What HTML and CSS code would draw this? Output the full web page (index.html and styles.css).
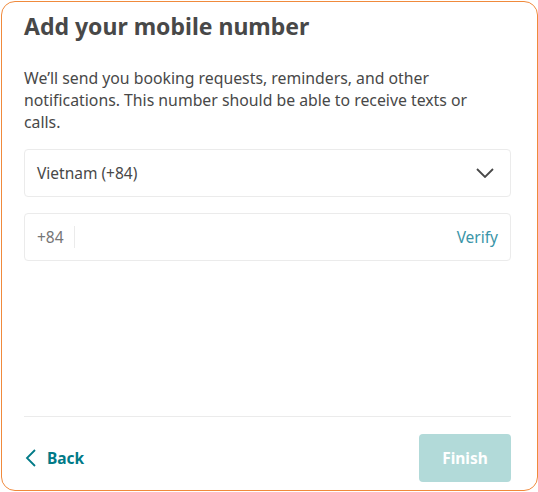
FILE: index.html
```html
<!DOCTYPE html>
<html>
<head>
<meta charset="utf-8">
<link rel="stylesheet" href="styles.css">
</head>
<body>
<div class="card">
  <div class="main">
    <h1 class="title">Add your mobile number</h1>
    <p class="desc">We’ll send you booking requests, reminders, and other notifications. This number should be able to receive texts or calls.</p>
    <div class="field select">
      <span class="value">Vietnam (+84)</span>
      <svg class="chev" width="18" height="10" viewBox="0 0 18 10"><path d="M1 1 L9 9 L17 1" fill="none" stroke="#484848" stroke-width="1.8"/></svg>
    </div>
    <div class="field phone">
      <span class="prefix">+84</span>
      <span class="sep"></span>
      <span class="grow"></span>
      <span class="verify">Verify</span>
    </div>
  </div>
  <div class="footer">
    <a class="back">
      <svg width="12" height="18" viewBox="0 0 12 18"><path d="M10 1 L2 9 L10 17" fill="none" stroke="#007a87" stroke-width="1.8"/></svg>
      <span>Back</span>
    </a>
    <button class="finish">Finish</button>
  </div>
</div>
</body>
</html>
```
FILE: styles.css
```css
html, body { margin: 0; padding: 0; background: #fff; }
body { font-family: "Noto Sans", "DejaVu Sans", sans-serif; color: #484848; }
.card {
  box-sizing: border-box;
  width: 537px;
  height: 490px;
  margin: 1px 0 0 1px;
  border: 1px solid #f08a3c;
  border-radius: 14px;
  padding: 0 26px 0 22px;
  display: flex;
  flex-direction: column;
}
.main { flex: 1; }
.title {
  margin: 7px 0 0;
  font-size: 23px;
  font-weight: 700;
  line-height: 34px;
  color: #484848;
}
.desc {
  margin: 24px 0 0;
  padding-right: 10px;
  font-size: 15.8px;
  line-height: 22px;
  color: #484848;
}
.field {
  box-sizing: border-box;
  height: 48px;
  border: 1px solid #ebebeb;
  border-radius: 4px;
  display: flex;
  align-items: center;
  padding: 0 12px;
  font-size: 15.5px;
}
.select { margin-top: 16px; justify-content: space-between; }
.select .chev { margin-right: 4px; }
.phone { margin-top: 16px; }
.prefix { color: #767676; }
.sep { width: 1px; height: 22px; background: #ebebeb; margin-left: 10px; }
.grow { flex: 1; }
.verify { color: #3a95a8; }
.footer {
  border-top: 1px solid #ebebeb;
  height: 65px;
  margin-bottom: 8px;
  display: flex;
  align-items: flex-end;
  justify-content: space-between;
}
.back {
  display: flex;
  align-items: center;
  gap: 10px;
  color: #007a87;
  font-weight: 700;
  font-size: 15.5px;
  height: 48px;
  padding-left: 1px;
}
.finish {
  width: 92px;
  height: 48px;
  border: none;
  border-radius: 4px;
  background: #b2dad9;
  color: #fff;
  font-family: "Noto Sans", sans-serif;
  font-weight: 700;
  font-size: 15.5px;
}
```
